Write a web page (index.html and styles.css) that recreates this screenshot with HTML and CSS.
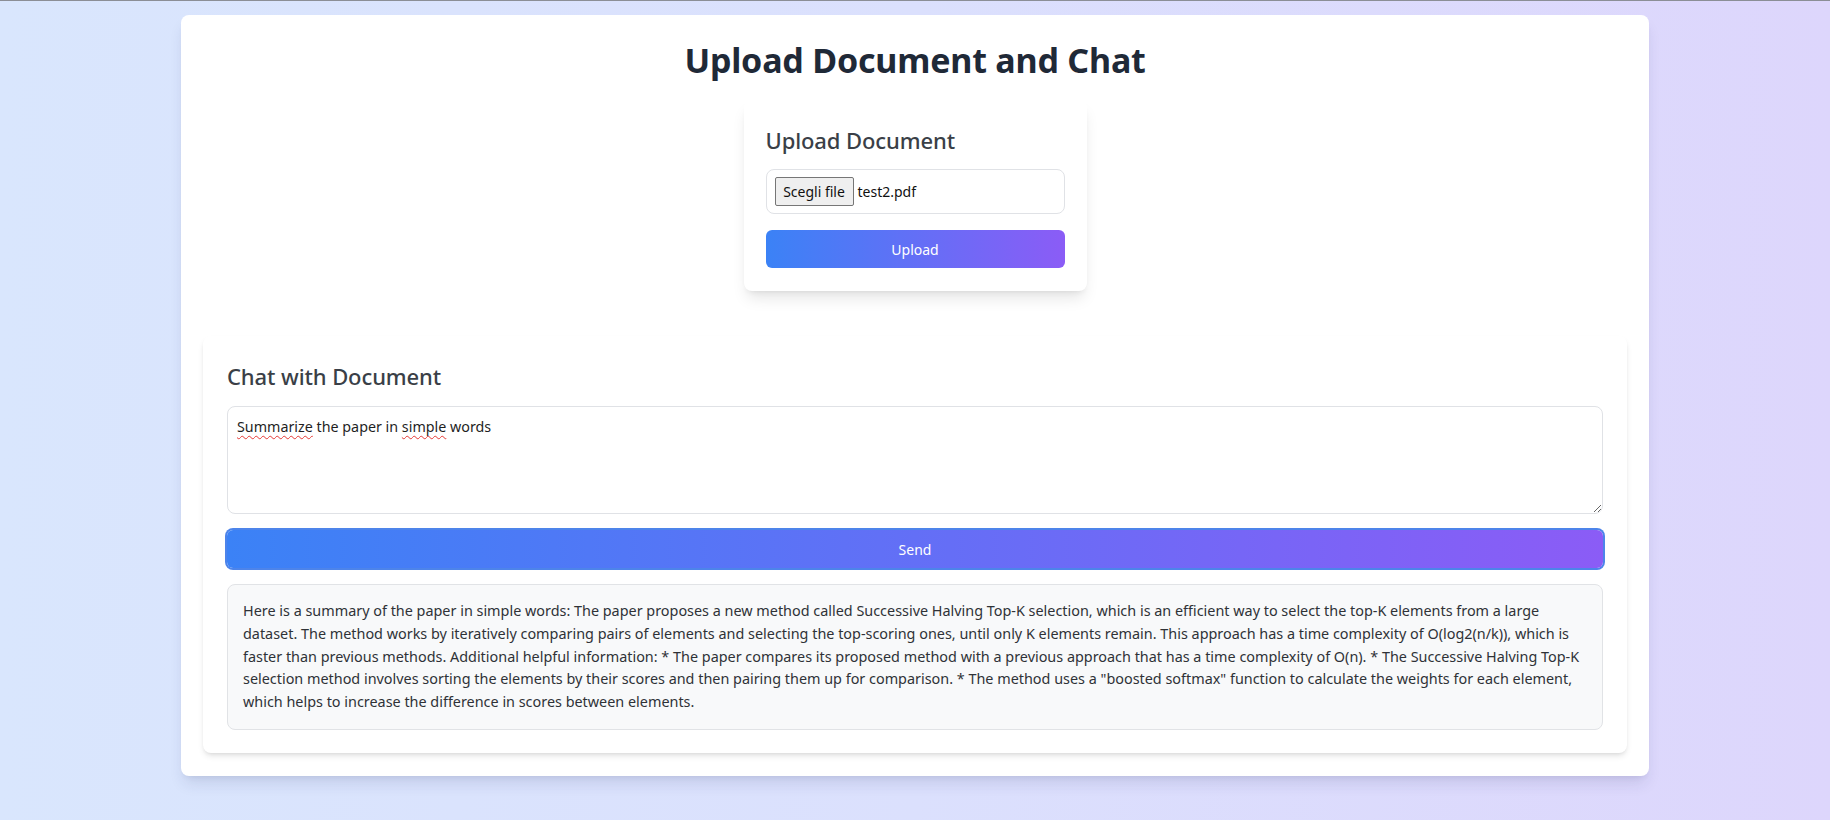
FILE: index.html
```html
<!DOCTYPE html>
<html lang="en">
<head>
<meta charset="utf-8">
<title>Upload Document and Chat</title>
<link rel="stylesheet" href="styles.css">
</head>
<body>
<div class="topline"></div>
<main class="page-card">
  <h1 class="title">Upload Document and Chat</h1>
  <section class="upload-card">
    <h2 class="card-heading">Upload Document</h2>
    <div class="file-field">
      <span class="file-btn">Scegli file</span>
      <span class="file-name">test2.pdf</span>
    </div>
    <button class="grad-btn upload-btn" type="button">Upload</button>
  </section>
  <section class="chat-card">
    <h2 class="card-heading">Chat with Document</h2>
    <div class="prompt-box"><span class="typo">Summarize</span> the paper in <span class="typo">simple</span> words</div>
    <button class="grad-btn send-btn" type="button">Send</button>
    <div class="response">Here is a summary of the paper in simple words: The paper proposes a new method called Successive Halving Top-K selection, which is an efficient way to select the top-K elements from a large<br>dataset. The method works by iteratively comparing pairs of elements and selecting the top-scoring ones, until only K elements remain. This approach has a time complexity of O(log2(n/k)), which is<br>faster than previous methods. Additional helpful information: * The paper compares its proposed method with a previous approach that has a time complexity of O(n). * The Successive Halving Top-K<br>selection method involves sorting the elements by their scores and then pairing them up for comparison. * The method uses a "boosted softmax" function to calculate the weights for each element,<br>which helps to increase the difference in scores between elements.</div>
  </section>
</main>
</body>
</html>
```

FILE: styles.css
```css
html, body {
  margin: 0;
  padding: 0;
}

body {
  min-height: 820px;
  background: linear-gradient(to right, #d9e6fd 0%, #dbe0fd 50%, #ddd6fc 100%);
  font-family: "Noto Sans", "Open Sans", sans-serif;
  color: #1f2937;
}

.topline {
  height: 1px;
  background: #8b8e96;
}

.page-card {
  box-sizing: border-box;
  width: 1468px;
  margin: 14px auto 0;
  padding: 25px 22px 23px;
  background: #ffffff;
  border-radius: 8px;
  box-shadow: 0 10px 15px -3px rgba(30, 41, 90, 0.12), 0 4px 6px -4px rgba(30, 41, 90, 0.1);
}

.title {
  margin: 0 0 20px;
  font-size: 34px;
  line-height: 40px;
  font-weight: 700;
  text-align: center;
  color: #1f2937;
  letter-spacing: -0.2px;
}

.card-heading {
  margin: 0 0 13px;
  font-size: 22px;
  line-height: 32px;
  font-weight: 500;
  color: #3a3f47;
  letter-spacing: -0.1px;
}

.upload-card {
  box-sizing: border-box;
  width: 343px;
  margin: 0 auto 45px;
  padding: 24px 22px 23px;
  background: #ffffff;
  border-radius: 8px;
  box-shadow: 0 10px 15px -3px rgba(0, 0, 0, 0.1), 0 4px 6px -4px rgba(0, 0, 0, 0.1);
}

.file-field {
  box-sizing: border-box;
  height: 45px;
  display: flex;
  align-items: center;
  gap: 4px;
  padding: 0 8px;
  border: 1px solid #e0e2e6;
  border-radius: 8px;
  font-size: 14px;
  color: #111111;
}

.file-btn {
  box-sizing: border-box;
  height: 29px;
  width: 79px;
  display: flex;
  align-items: center;
  justify-content: center;
  background: #efefef;
  border: 1px solid #767676;
  border-radius: 2px;
  color: #111111;
}

.grad-btn {
  display: block;
  box-sizing: border-box;
  width: 100%;
  height: 38px;
  border: 0;
  border-radius: 6px;
  background: linear-gradient(to right, #3b82f6, #8b5cf6);
  color: #ffffff;
  font-family: inherit;
  font-size: 14px;
  cursor: pointer;
}

.upload-btn {
  margin-top: 16px;
}

.chat-card {
  padding: 24px 24px 23px;
  background: #ffffff;
  border-radius: 8px;
  box-shadow: 0 4px 6px -1px rgba(0, 0, 0, 0.1), 0 2px 4px -2px rgba(0, 0, 0, 0.1);
}

.chat-card .card-heading {
  margin-bottom: 14px;
}

.prompt-box {
  box-sizing: border-box;
  height: 108px;
  padding: 9px;
  border: 1px solid #e0e2e6;
  border-radius: 8px;
  font-size: 14.3px;
  line-height: 22px;
  color: #1f1f1f;
  overflow: auto;
  resize: vertical;
}

.typo {
  text-decoration: underline wavy #e53935;
  text-decoration-thickness: 1px;
  text-underline-offset: 3px;
}

.send-btn {
  margin-top: 16px;
  box-shadow: 0 0 0 2px #4d84ea;
}

.response {
  margin-top: 16px;
  padding: 15px;
  background: #f8f9fa;
  border: 1px solid #e1e3e6;
  border-radius: 8px;
  font-size: 14.4px;
  line-height: 22.8px;
  color: #2f3237;
  white-space: nowrap;
}
```
